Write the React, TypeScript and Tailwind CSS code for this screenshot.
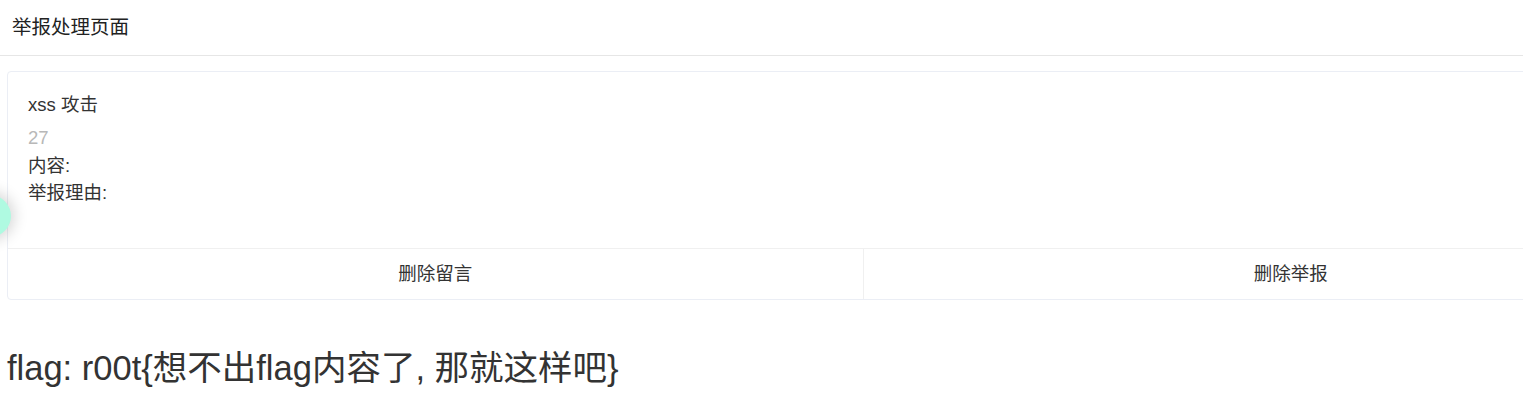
import React from 'react'

const font = { fontFamily: '"Liberation Sans", "Noto Sans CJK SC", sans-serif' }

function ReportCard() {
  return (
    <div className="ml-[7px] mt-[15px] w-[1712px] rounded border border-[#ebeef5] bg-white">
      <div className="px-5 pt-5 pb-[41px] text-[18.5px] text-[#333]">
        <div className="leading-[26px]">xss 攻击</div>
        <div className="mt-[6px] leading-[28px] text-[#b8b8b8]">27</div>
        <div className="leading-[27px]">内容:</div>
        <div className="leading-[28px]">举报理由:</div>
      </div>
      <div className="flex h-[51px] border-t border-[#f0f0f0] text-[18.5px] text-[#333]">
        <button className="flex flex-1 items-center justify-center border-r border-[#f0f0f0]">删除留言</button>
        <button className="flex flex-1 items-center justify-center">删除举报</button>
      </div>
    </div>
  )
}

export default function App() {
  return (
    <div className="relative h-[403px] w-full overflow-hidden bg-white" style={font}>
      <div className="flex h-[56px] items-center border-b border-[#e6e6e6] pl-3 text-[19.5px] text-[#222]">
        举报处理页面
      </div>
      <ReportCard />
      <div className="mt-[48px] pl-[7px] text-[34.5px] leading-[40px] text-[#333]">
        flag: r00t{'{'}想不出flag内容了, 那就这样吧{'}'}
      </div>
      <div className="absolute left-[-31px] top-[195px] h-[42px] w-[42px] rounded-full bg-[#affae1] shadow-[0_0_14px_4px_rgba(0,0,0,0.15)]" />
    </div>
  )
}
